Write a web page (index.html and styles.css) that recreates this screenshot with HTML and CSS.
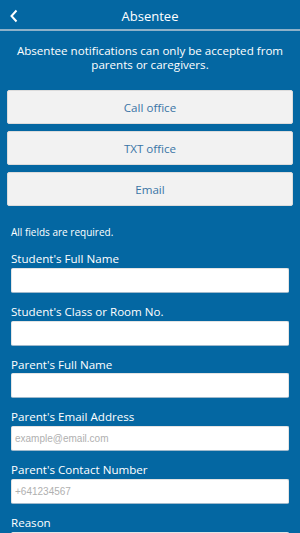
FILE: index.html
```html
<!DOCTYPE html>
<html>
<head>
<meta charset="utf-8">
<link rel="stylesheet" href="styles.css">
</head>
<body>
<header class="topbar">
  <span class="back">
    <svg width="10" height="14" viewBox="0 0 10 14"><polyline points="7.5,1.5 2.5,7 7.5,12.5" fill="none" stroke="#fff" stroke-width="2"/></svg>
  </span>
  <h1 class="title">Absentee</h1>
</header>
<p class="notice">Absentee notifications can only be accepted from parents or caregivers.</p>
<div class="actions">
  <button class="btn">Call office</button>
  <button class="btn">TXT office</button>
  <button class="btn">Email</button>
</div>
<form class="form">
  <p class="required">All fields are required.</p>
  <label class="field"><span class="label">Student's Full Name</span><input class="input" type="text"></label>
  <label class="field"><span class="label">Student's Class or Room No.</span><input class="input" type="text"></label>
  <label class="field"><span class="label">Parent's Full Name</span><input class="input" type="text"></label>
  <label class="field"><span class="label">Parent's Email Address</span><input class="input" type="text" placeholder="example@email.com"></label>
  <label class="field"><span class="label">Parent's Contact Number</span><input class="input" type="text" placeholder="+641234567"></label>
  <label class="field"><span class="label">Reason</span><input class="input" type="text"></label>
</form>
</body>
</html>
```

FILE: styles.css
```css
html, body {
  margin: 0;
  padding: 0;
}
body {
  background: #0467a2;
  font-family: "Open Sans", "DejaVu Sans", sans-serif;
  color: #fff;
  width: 300px;
  overflow: hidden;
}
.topbar {
  position: relative;
  height: 29px;
  display: flex;
  align-items: center;
  justify-content: center;
  border-bottom: 2px solid #8db1c9;
}
.back {
  position: absolute;
  left: 9px;
  top: 9px;
  display: flex;
}
.title {
  margin: 0;
  font-size: 13px;
  font-weight: normal;
  line-height: 16px;
  padding-top: 2px;
}
.notice {
  margin: 13px 10px 0;
  text-align: center;
  font-size: 11.6px;
  line-height: 14px;
}
.actions {
  margin: 18px 7px 0;
  display: flex;
  flex-direction: column;
  gap: 7px;
}
.btn {
  height: 34px;
  background: #f2f2f2;
  border: 1px solid #dcdcdc;
  border-radius: 2px;
  color: #3a75a6;
  font-family: "Open Sans", sans-serif;
  font-size: 11.6px;
  padding: 0;
}
.form {
  margin: 0 11px;
  display: flex;
  flex-direction: column;
}
.required {
  margin: 20px 0 0;
  font-size: 10px;
  line-height: 12px;
}
.field {
  display: flex;
  flex-direction: column;
  margin-top: 12px;
}
.required + .field {
  margin-top: 14px;
}
.label {
  font-size: 11.6px;
  line-height: 13.75px;
  margin-bottom: 2px;
}
.input {
  height: 25px;
  box-sizing: border-box;
  border: 1px solid #e4e4e4;
  border-bottom-color: #9fb9cc;
  border-radius: 2px;
  background: #fff;
  padding: 0 3px;
  font-family: "Liberation Sans", Arial, sans-serif;
  font-size: 10px;
  color: #333;
  outline: none;
}
.input::placeholder {
  color: #b0b0b0;
}
```
